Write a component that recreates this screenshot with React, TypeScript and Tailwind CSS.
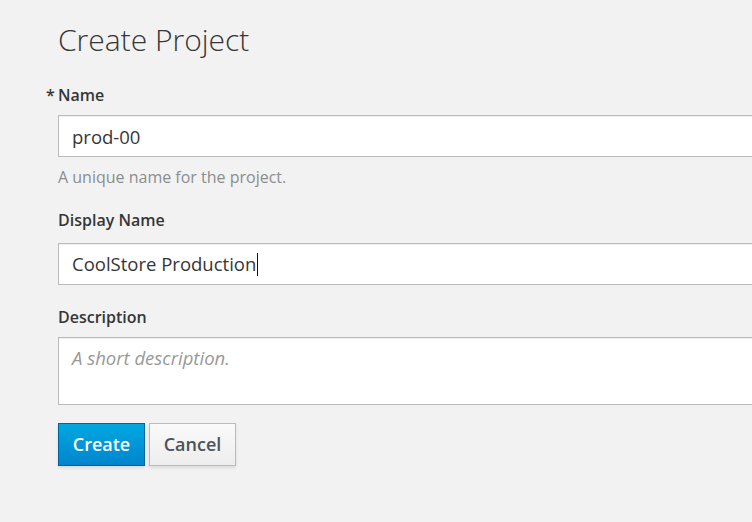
import React from 'react';

const field =
  'w-[760px] h-[42px] border border-[#bbbbbb] bg-white px-[13px] text-[18.5px] text-[#363636] shadow-[inset_0_1px_1px_rgba(3,3,3,0.075)] outline-none';

export default function App() {
  return (
    <div className="w-full h-[522px] overflow-hidden bg-[#f2f2f2] font-['Open_Sans',sans-serif] text-[#363636]">
      <div className="flex flex-col pl-[58px] pt-[22px]">
        <h1 className="text-[30px] leading-[36px] font-light text-[#363636]">Create Project</h1>

        <label className="relative mt-[27px] text-[16px] leading-[20px] font-semibold">
          <span className="absolute -left-[12px] top-0">*</span>
          Name
        </label>
        <input className={`${field} mt-[10px]`} value="prod-00" readOnly />
        <p className="mt-[10px] text-[16px] leading-[20px] text-[#8b8d8f]">A unique name for the project.</p>

        <label className="mt-[23px] text-[16px] leading-[20px] font-semibold">Display Name</label>
        <div
          className={`${field} mt-[13px] flex items-center border-[#0088ce] shadow-[inset_0_1px_1px_rgba(3,3,3,0.075),0_0_6px_rgba(0,136,206,0.5)]`}
        >
          <span>CoolStore Production</span>
          <span className="ml-px h-[23px] w-px bg-[#111]" />
        </div>

        <label className="mt-[22px] text-[16px] leading-[20px] font-semibold">Description</label>
        <textarea
          className={`${field} mt-[10px] h-[68px] resize-none pt-[8px] leading-[24px] placeholder:italic placeholder:text-[#999]`}
          placeholder="A short description."
        />

        <div className="mt-[18px] flex gap-[4px]">
          <button className="h-[43px] w-[87px] border border-[#00659c] bg-gradient-to-b from-[#00a8e1] to-[#0085cd] text-[18px] font-semibold text-white shadow-[0_2px_3px_rgba(3,3,3,0.1)]">
            Create
          </button>
          <button className="h-[43px] w-[87px] border border-[#bbbbbb] bg-gradient-to-b from-[#fafafa] to-[#ededed] text-[18px] font-semibold text-[#4d5258] shadow-[0_2px_3px_rgba(3,3,3,0.1)]">
            Cancel
          </button>
        </div>
      </div>
    </div>
  );
}
